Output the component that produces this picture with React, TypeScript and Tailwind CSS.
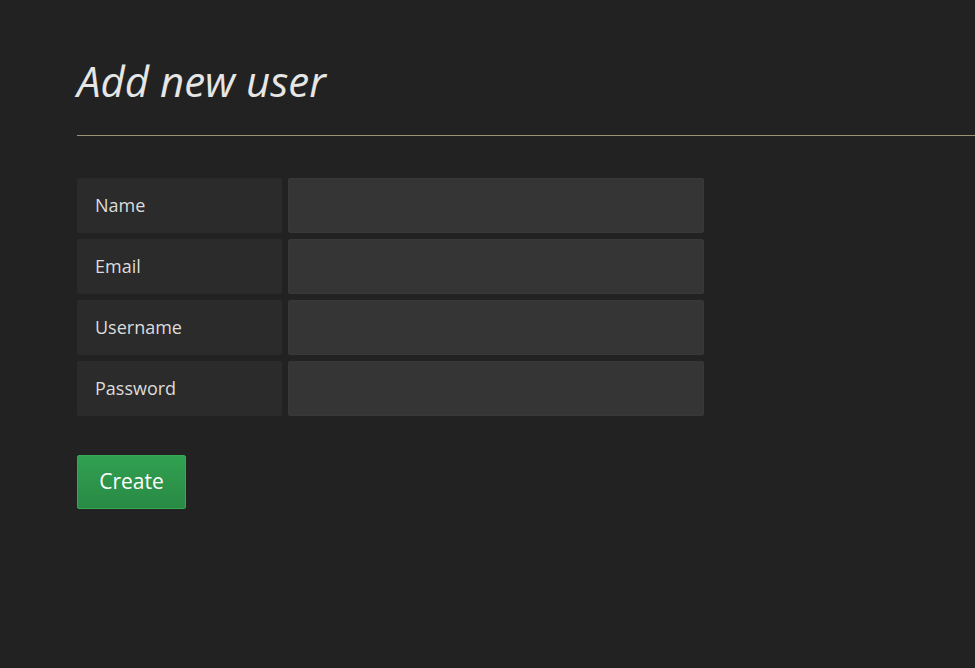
const fields = ['Name', 'Email', 'Username', 'Password'];

export default function App() {
  return (
    <div className="min-h-[668px] w-full bg-[#232223] pl-[77px] pt-[54px] font-['Open_Sans',sans-serif]">
      <h1 className="text-[42px] italic leading-[54px] text-[#e6e6e6]">
        Add new user
      </h1>
      <div className="mt-[27px] h-px w-full bg-[#9c9075]" />

      <form className="mt-[42px] flex flex-col gap-[6px]">
        {fields.map((label) => (
          <div key={label} className="flex gap-[6px]">
            <label className="flex h-[55px] w-[205px] items-center rounded-[2px] bg-[#2b2b2b] pl-[18px] text-[18px] text-[#dcdcdc]">
              {label}
            </label>
            <input
              type={label === 'Password' ? 'password' : 'text'}
              className="h-[55px] w-[416px] rounded-[2px] border border-[#383838] bg-[#353535] px-3 text-[17px] text-[#e0e0e0] outline-none"
            />
          </div>
        ))}
      </form>

      <button
        type="button"
        className="mt-[39px] flex h-[54px] w-[109px] items-center justify-center rounded-[2px] border border-[#35a954] bg-gradient-to-b from-[#30a050] to-[#2a8a45] text-[21px] text-white"
      >
        Create
      </button>
    </div>
  );
}
